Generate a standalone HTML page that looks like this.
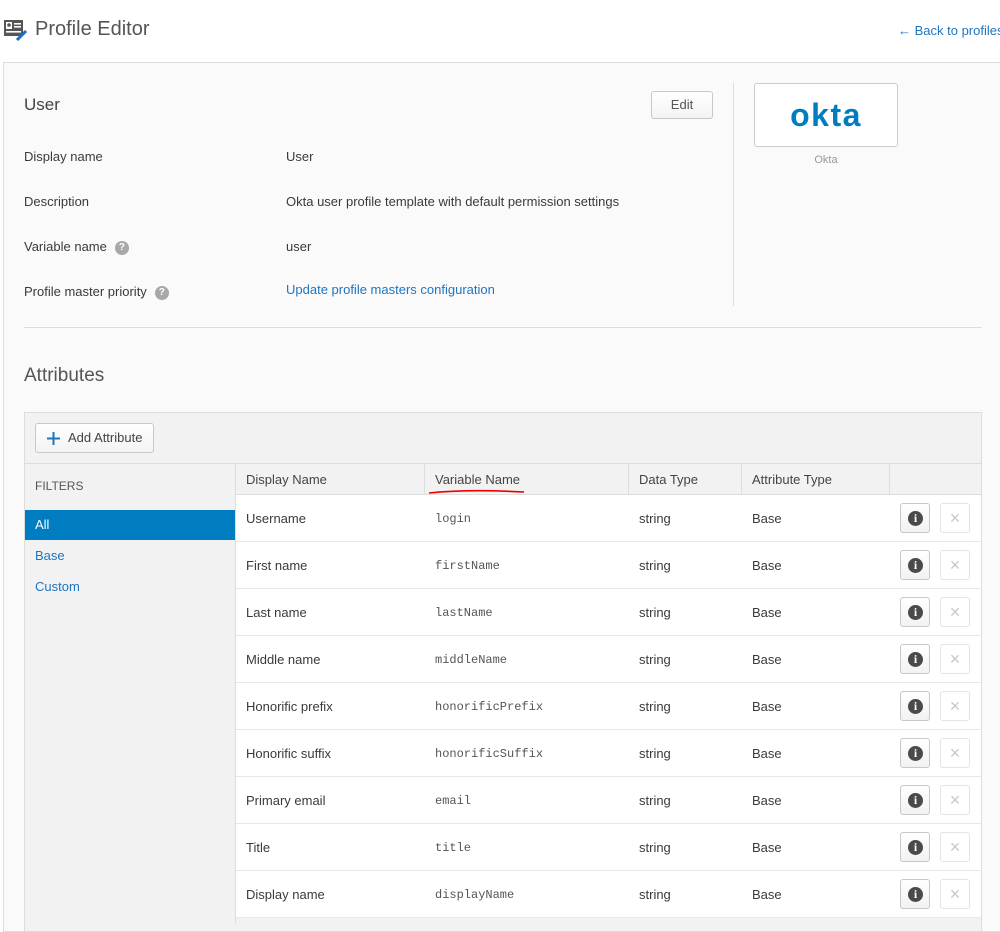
<!DOCTYPE html>
<html><head><meta charset="utf-8"><style>
*{box-sizing:border-box;margin:0;padding:0}
body{width:1000px;height:918px;overflow:hidden;background:#fff;font-family:"Liberation Sans",sans-serif;font-size:13px;color:#3a3a3a;position:relative}
.a{position:absolute}
.mono{font-family:"Liberation Mono",monospace;font-size:12px;color:#555}
.lbl{left:24px;font-size:13px}
.val{left:286px}
.q{display:inline-block;width:14px;height:14px;border-radius:7px;background:#a8a8a8;color:#fff;font-size:10px;text-align:center;line-height:14px;font-weight:bold;vertical-align:middle;margin-left:8px}
.row{position:absolute;left:236px;width:745px;height:47px;border-bottom:1px solid #e8e8e8;background:#fff}
.row span{position:absolute;top:16px}
.row span.mono{top:17px}
.ib{position:absolute;left:664px;top:8px;width:30px;height:30px;border:1px solid #c8c8c8;border-radius:3px;background:linear-gradient(#fff,#f2f2f2)}
.ib i{position:absolute;left:7px;top:7px;width:15px;height:15px;border-radius:8px;background:#4a4a4a;color:#fff;font-style:normal;font-weight:bold;font-family:"Liberation Serif",serif;font-size:12px;text-align:center;line-height:15px}
.xb{position:absolute;left:704px;top:8px;width:30px;height:30px;border:1px solid #e4e4e4;border-radius:3px;background:#fff;color:#c8c8c8;text-align:center;line-height:28px;font-size:18px}
</style></head><body>
<svg class="a" style="left:3px;top:19px" width="26" height="22" viewBox="0 0 26 22">
<rect x="1" y="1" width="19" height="16" fill="#555"/>
<rect x="3" y="3" width="6" height="7" fill="#fff"/><circle cx="6" cy="6" r="1.8" fill="#555"/>
<rect x="11" y="4" width="7" height="1.6" fill="#fff"/><rect x="11" y="7" width="7" height="1.6" fill="#fff"/><rect x="3" y="12" width="15" height="1.6" fill="#fff"/>
<path d="M14 21 L23 12" stroke="#1a6fc4" stroke-width="3"/>
</svg>
<div class="a" style="left:35px;top:18px;font-size:20px;color:#555">Profile Editor</div>
<div class="a" style="left:898px;top:23px;font-size:13px;color:#1f75c0;white-space:nowrap">← Back to profiles</div>

<div class="a" style="left:3px;top:62px;width:1000px;height:870px;background:#fafafa;border:1px solid #ddd"></div>
<div class="a" style="left:24px;top:95px;font-size:17px;color:#444">User</div>
<div class="a" style="left:651px;top:91px;width:62px;height:28px;border:1px solid #c8c8c8;border-radius:3px;background:linear-gradient(#fff,#f3f3f3);text-align:center;line-height:26px;color:#555">Edit</div>
<div class="a" style="left:733px;top:83px;width:1px;height:223px;background:#ddd"></div>
<div class="a" style="left:754px;top:83px;width:144px;height:64px;border:1px solid #ccc;border-radius:3px;background:#fff;text-align:center;line-height:62px;font-size:32px;font-weight:bold;color:#007dc1;letter-spacing:1.5px">okta</div>
<div class="a" style="left:754px;top:154px;width:144px;text-align:center;font-size:11px;color:#999">Okta</div>

<div class="a lbl" style="top:149px">Display name</div><div class="a val" style="top:149px">User</div>
<div class="a lbl" style="top:194px">Description</div><div class="a val" style="top:194px">Okta user profile template with default permission settings</div>
<div class="a lbl" style="top:239px">Variable name<span class="q">?</span></div><div class="a val" style="top:239px">user</div>
<div class="a lbl" style="top:284px">Profile master priority<span class="q">?</span></div><div class="a val" style="top:282px;color:#1f75c0">Update profile masters configuration</div>
<div class="a" style="left:24px;top:327px;width:958px;height:1px;background:#ddd"></div>
<div class="a" style="left:24px;top:365px;font-size:19px;color:#555">Attributes</div>

<div class="a" style="left:24px;top:412px;width:958px;height:520px;border:1px solid #ddd;background:#f2f2f2"></div>
<div class="a" style="left:35px;top:423px;width:119px;height:30px;border:1px solid #c8c8c8;border-radius:3px;background:linear-gradient(#fff,#f3f3f3);line-height:28px;color:#444"><svg class="a" style="left:11px;top:8px" width="13" height="13"><path d="M6.5 0V13M0 6.5H13" stroke="#1f75c0" stroke-width="2"/></svg><span style="position:absolute;left:32px">Add Attribute</span></div>
<div class="a" style="left:25px;top:463px;width:956px;height:1px;background:#ddd"></div>
<div class="a" style="left:35px;top:479px;font-size:12px;color:#555">FILTERS</div>
<div class="a" style="left:25px;top:510px;width:210px;height:30px;background:#007dc1;color:#fff;line-height:30px;padding-left:10px">All</div>
<div class="a" style="left:35px;top:548px;color:#1f75c0">Base</div>
<div class="a" style="left:35px;top:579px;color:#1f75c0">Custom</div>
<div class="a" style="left:235px;top:464px;width:1px;height:460px;background:#ddd"></div>

<div class="a" style="left:236px;top:464px;width:745px;height:31px;background:#f2f2f2;border-bottom:1px solid #ddd;color:#444">
<span class="a" style="left:10px;top:8px">Display Name</span>
<span class="a" style="left:188px;top:0;width:1px;height:30px;background:#ddd"></span>
<span class="a" style="left:199px;top:8px">Variable Name</span>
<span class="a" style="left:392px;top:0;width:1px;height:30px;background:#ddd"></span>
<span class="a" style="left:403px;top:8px">Data Type</span>
<span class="a" style="left:505px;top:0;width:1px;height:30px;background:#ddd"></span>
<span class="a" style="left:516px;top:8px">Attribute Type</span>
<span class="a" style="left:653px;top:0;width:1px;height:30px;background:#ddd"></span>
</div>
<svg class="a" style="left:428px;top:488px" width="100" height="8"><path d="M1 5 Q40 1 96 4" stroke="#e00" stroke-width="1.6" fill="none"/></svg>

<div class="row" style="top:495px"><span style="left:10px">Username</span><span class="mono" style="left:199px">login</span><span style="left:403px">string</span><span style="left:516px">Base</span><div class="ib"><i>i</i></div><div class="xb">×</div></div>
<div class="row" style="top:542px"><span style="left:10px">First name</span><span class="mono" style="left:199px">firstName</span><span style="left:403px">string</span><span style="left:516px">Base</span><div class="ib"><i>i</i></div><div class="xb">×</div></div>
<div class="row" style="top:589px"><span style="left:10px">Last name</span><span class="mono" style="left:199px">lastName</span><span style="left:403px">string</span><span style="left:516px">Base</span><div class="ib"><i>i</i></div><div class="xb">×</div></div>
<div class="row" style="top:636px"><span style="left:10px">Middle name</span><span class="mono" style="left:199px">middleName</span><span style="left:403px">string</span><span style="left:516px">Base</span><div class="ib"><i>i</i></div><div class="xb">×</div></div>
<div class="row" style="top:683px"><span style="left:10px">Honorific prefix</span><span class="mono" style="left:199px">honorificPrefix</span><span style="left:403px">string</span><span style="left:516px">Base</span><div class="ib"><i>i</i></div><div class="xb">×</div></div>
<div class="row" style="top:730px"><span style="left:10px">Honorific suffix</span><span class="mono" style="left:199px">honorificSuffix</span><span style="left:403px">string</span><span style="left:516px">Base</span><div class="ib"><i>i</i></div><div class="xb">×</div></div>
<div class="row" style="top:777px"><span style="left:10px">Primary email</span><span class="mono" style="left:199px">email</span><span style="left:403px">string</span><span style="left:516px">Base</span><div class="ib"><i>i</i></div><div class="xb">×</div></div>
<div class="row" style="top:824px"><span style="left:10px">Title</span><span class="mono" style="left:199px">title</span><span style="left:403px">string</span><span style="left:516px">Base</span><div class="ib"><i>i</i></div><div class="xb">×</div></div>
<div class="row" style="top:871px"><span style="left:10px">Display name</span><span class="mono" style="left:199px">displayName</span><span style="left:403px">string</span><span style="left:516px">Base</span><div class="ib"><i>i</i></div><div class="xb">×</div></div>
</body></html>
